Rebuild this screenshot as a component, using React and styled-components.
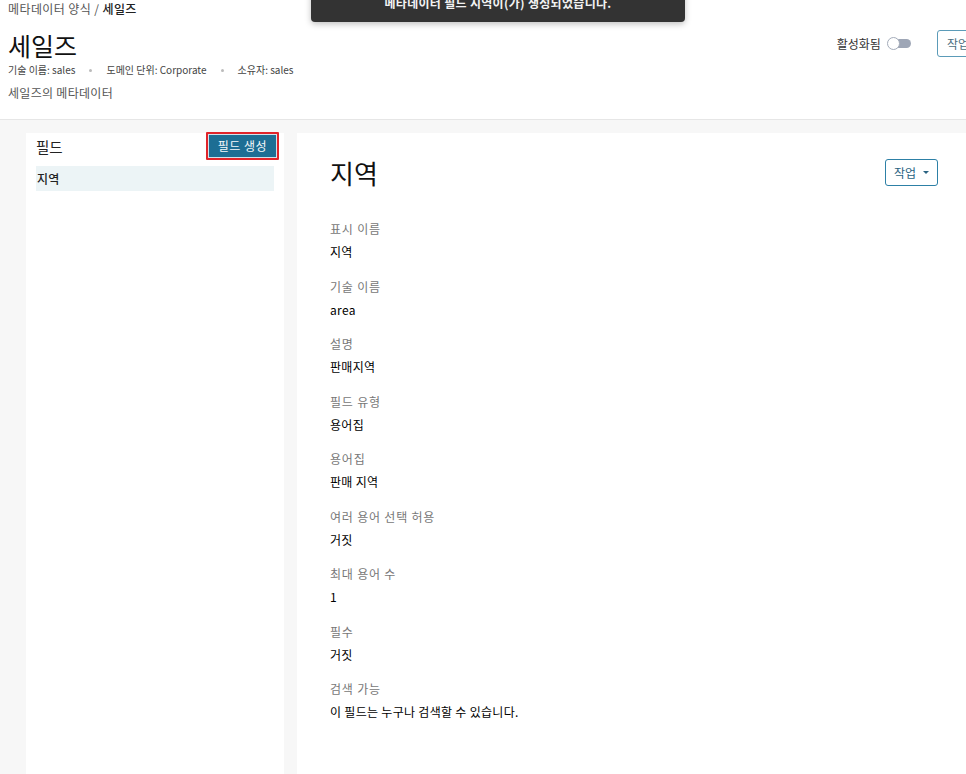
import React from "react";
import styled, { createGlobalStyle } from "styled-components";

const GlobalStyle = createGlobalStyle`
  html, body {
    margin: 0;
    padding: 0;
    overflow: hidden;
    background: #f7f7f7;
  }
  body {
    font-family: "Noto Sans CJK KR", "Noto Sans", "Liberation Sans", sans-serif;
    color: #222;
  }
`;

const Page = styled.div`
  position: relative;
  width: 997px;
  min-height: 774px;
  display: flex;
  flex-direction: column;
`;

const Toast = styled.div`
  position: absolute;
  top: -18px;
  left: 311px;
  width: 374px;
  height: 40px;
  background: #333;
  border-radius: 4px;
  box-shadow: 0 2px 6px rgba(0, 0, 0, 0.25);
  color: #f2f2f2;
  font-size: 12px;
  font-weight: 700;
  letter-spacing: 0.3px;
  display: flex;
  align-items: center;
  justify-content: center;
  z-index: 10;
`;

const Header = styled.header`
  background: #fff;
  border-bottom: 1px solid #e6e6e6;
  height: 120px;
  box-sizing: border-box;
  padding: 0 18px 0 8px;
  display: flex;
  justify-content: space-between;
`;

const HeaderInfo = styled.div`
  display: flex;
  flex-direction: column;
`;

const Breadcrumb = styled.div`
  font-size: 12px;
  line-height: 17px;
  letter-spacing: 0.4px;
  color: #555;
  strong {
    color: #222;
    font-weight: 500;
  }
`;

const PageTitle = styled.h1`
  margin: 12px 0 0;
  font-size: 25px;
  font-weight: 400;
  line-height: 32px;
  color: #111;
`;

const MetaRow = styled.div`
  display: flex;
  align-items: center;
  gap: 14px;
  font-size: 10px;
  line-height: 16px;
  color: #444;
  margin-top: 1px;
`;

const Dot = styled.span`
  width: 3px;
  height: 3px;
  border-radius: 50%;
  background: #bbb;
`;

const Description = styled.div`
  margin-top: 7px;
  font-size: 12px;
  line-height: 16px;
  letter-spacing: 0.3px;
  color: #555;
`;

const HeaderActions = styled.div`
  display: flex;
  align-items: center;
  gap: 26px;
  height: 27px;
  margin-top: 30px;
`;

const ToggleLabel = styled.label`
  display: flex;
  align-items: center;
  gap: 7px;
  font-size: 12px;
  color: #333;
`;

const Track = styled.span`
  position: relative;
  width: 23px;
  height: 9px;
  border-radius: 5px;
  background: #9ea6b6;
`;

const Knob = styled.span`
  position: absolute;
  left: -1px;
  top: -2px;
  width: 11px;
  height: 11px;
  border-radius: 50%;
  background: #fff;
  border: 1px solid #a4acba;
`;

const OutlineButton = styled.button`
  height: 27px;
  padding: 0 ${(p) => (p.$caret ? "8px" : "9px")};
  border: 1px solid ${(p) => (p.$caret ? "#2d80a6" : "#5b9bb8")};
  border-radius: 3px;
  background: #fff;
  color: ${(p) => (p.$caret ? "#2a6382" : "#4d6f80")};
  font-family: inherit;
  font-size: 12px;
  display: flex;
  align-items: center;
  gap: 7px;
`;

const Caret = styled.span`
  width: 0;
  height: 0;
  border-left: 3px solid transparent;
  border-right: 3px solid transparent;
  border-top: 3px solid #2a6382;
`;

const Body = styled.main`
  flex: 1;
  display: flex;
  gap: 13px;
  padding: 13px 0 0 26px;
`;

const Panel = styled.section`
  background: #fff;
  box-sizing: border-box;
  width: ${(p) => p.$width};
  padding: ${(p) => p.$pad};
`;

const FieldListHeader = styled.div`
  display: flex;
  justify-content: space-between;
  align-items: center;
  height: 26px;
  margin-right: -5px;
`;

const FieldListTitle = styled.h2`
  margin: 0;
  font-size: 14.5px;
  font-weight: 400;
  color: #222;
`;

const PrimaryButton = styled.button`
  height: 28px;
  margin-top: -1px;
  padding: 0 10px;
  background: #1d6e94;
  color: #f4f8fa;
  border: 2px solid #e0242a;
  box-shadow: inset 0 0 0 1px #cfe3ec;
  border-radius: 1px;
  font-family: inherit;
  font-size: 12px;
  letter-spacing: 0.5px;
`;

const FieldItem = styled.div`
  margin-top: 7px;
  height: 25px;
  display: flex;
  align-items: center;
  padding: 0 1px;
  font-size: 12px;
  font-weight: 500;
  letter-spacing: 0.3px;
  background: ${(p) => (p.$selected ? "#ecf4f6" : "transparent")};
`;

const DetailHeader = styled.div`
  display: flex;
  justify-content: space-between;
  align-items: center;
  height: 26px;
  margin-bottom: 35px;
`;

const DetailTitle = styled.h2`
  margin: 0;
  font-size: 26px;
  font-weight: 400;
  color: #111;
`;

const Field = styled.div`
  margin-bottom: 16.5px;
`;

const FieldLabel = styled.div`
  font-size: 12px;
  line-height: 18px;
  letter-spacing: 0.8px;
  color: #777;
`;

const FieldValue = styled.div`
  margin-top: 5px;
  font-size: 12px;
  line-height: 18px;
  letter-spacing: 0.3px;
  color: #000;
  font-weight: 400;
`;

const details = [
  ["표시 이름", "지역"],
  ["기술 이름", "area"],
  ["설명", "판매지역"],
  ["필드 유형", "용어집"],
  ["용어집", "판매 지역"],
  ["여러 용어 선택 허용", "거짓"],
  ["최대 용어 수", "1"],
  ["필수", "거짓"],
  ["검색 가능", "이 필드는 누구나 검색할 수 있습니다."],
];

export default function App() {
  return (
    <Page>
      <GlobalStyle />
      <Toast>메타데이터 필드 지역이(가) 생성되었습니다.</Toast>
      <Header>
        <HeaderInfo>
          <Breadcrumb>
            메타데이터 양식 / <strong>세일즈</strong>
          </Breadcrumb>
          <PageTitle>세일즈</PageTitle>
          <MetaRow>
            <span>기술 이름: sales</span>
            <Dot />
            <span>도메인 단위: Corporate</span>
            <Dot />
            <span>소유자: sales</span>
          </MetaRow>
          <Description>세일즈의 메타데이터</Description>
        </HeaderInfo>
        <HeaderActions>
          <ToggleLabel>
            활성화됨
            <Track>
              <Knob />
            </Track>
          </ToggleLabel>
          <OutlineButton>작업</OutlineButton>
        </HeaderActions>
      </Header>
      <Body>
        <Panel $width="258px" $pad="0 10px">
          <FieldListHeader>
            <FieldListTitle>필드</FieldListTitle>
            <PrimaryButton>필드 생성</PrimaryButton>
          </FieldListHeader>
          <FieldItem $selected>지역</FieldItem>
        </Panel>
        <Panel $width="674px" $pad="26px 33px 0 33px">
          <DetailHeader>
            <DetailTitle>지역</DetailTitle>
            <OutlineButton $caret>
              작업
              <Caret />
            </OutlineButton>
          </DetailHeader>
          {details.map(([label, value]) => (
            <Field key={label}>
              <FieldLabel>{label}</FieldLabel>
              <FieldValue>{value}</FieldValue>
            </Field>
          ))}
        </Panel>
      </Body>
    </Page>
  );
}
